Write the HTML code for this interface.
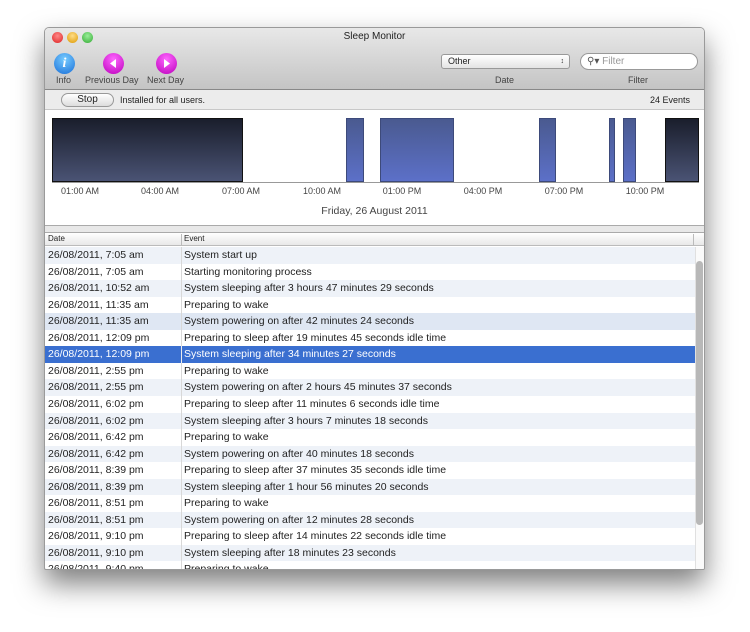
<!DOCTYPE html>
<html><head><style>
*{margin:0;padding:0;box-sizing:border-box}
body{width:750px;height:632px;background:#fff;position:relative;overflow:hidden;font-family:"Liberation Sans",sans-serif}
.win{position:absolute;left:44px;top:27px;width:661px;height:543px;background:#fff;border:1px solid #9a9a9a;border-radius:5px 5px 2px 2px;box-shadow:0 14px 28px rgba(0,0,0,.5);overflow:hidden}
.tb{position:absolute;left:0;top:0;width:100%;height:62px;background:linear-gradient(#e8e8e8,#c4c4c4);border-bottom:1px solid #888}
.ab{position:absolute;font-size:9px;color:#444;top:47px}
.dot{position:absolute;top:4px;width:11px;height:11px;border-radius:50%}
.btn{position:absolute;top:25px;width:21px;height:21px;border-radius:50%}
.st{position:absolute;left:0;top:62px;width:100%;height:20px;background:#ececec;border-bottom:1px solid #c8c8c8;font-size:9px;color:#222}
.chart{position:absolute;left:0;top:82px;width:100%;height:115px;background:#fff}
.bar{position:absolute;top:8px;height:64px;background:linear-gradient(#4a5a90,#5c70c8);border:1px solid #3d4a7a}
.dark{background:linear-gradient(#1a1e2c,#4a5374);border-color:#111}
.tl{position:absolute;top:76px;font-size:9px;color:#444;width:60px;margin-left:-30px;text-align:center}
.tick{position:absolute;top:73px;width:1px;height:4px;background:#999}
.row{position:absolute;left:0;width:650px;height:16.55px;font-size:10.5px;color:#222;line-height:16px}
.row span{position:absolute;left:3px}
.row span+span{left:139px}
.row.a{background:#eef2f8}
.row.s{background:#3a6fd0;color:#fff}
</style></head><body>
<div class="win">
 <div class="tb">
  <div class="dot" style="left:7px;background:radial-gradient(circle at 50% 35%,#f88,#d22)"></div>
  <div class="dot" style="left:22px;background:radial-gradient(circle at 50% 35%,#fd8,#d90)"></div>
  <div class="dot" style="left:37px;background:radial-gradient(circle at 50% 35%,#9e9,#3a3)"></div>
  <div style="position:absolute;top:3px;width:100%;text-align:center;font-size:10px;color:#222">Sleep Monitor</div>
  <div class="btn" style="left:9px;background:radial-gradient(circle at 50% 30%,#7cf,#1a6fd8);color:#fff;font:italic bold 14px 'Liberation Serif',serif;text-align:center;line-height:21px">i</div>
  <div class="btn" style="left:58px;background:radial-gradient(circle at 50% 30%,#f6f,#b0b)"><svg width="21" height="21"><path d="M13 6L7 10.5L13 15Z" fill="#fff"/></svg></div>
  <div class="btn" style="left:111px;background:radial-gradient(circle at 50% 30%,#f6f,#b0b)"><svg width="21" height="21"><path d="M8 6L14 10.5L8 15Z" fill="#fff"/></svg></div>
  <div class="ab" style="left:11px">Info</div>
  <div class="ab" style="left:40px">Previous Day</div>
  <div class="ab" style="left:102px">Next Day</div>
  <div style="position:absolute;left:396px;top:26px;width:129px;height:15px;border:1px solid #999;border-radius:3px;background:linear-gradient(#fff,#e4e4e4);font-size:9px;line-height:13px;padding-left:6px;color:#222">Other<span style="position:absolute;right:5px;font-size:7px">&#8597;</span></div>
  <div style="position:absolute;left:535px;top:25px;width:118px;height:17px;border:1px solid #999;border-radius:9px;background:#fff;font-size:10px;line-height:15px;padding-left:6px;color:#999"><span style="color:#555">&#9906;&#9662;</span> Filter</div>
  <div class="ab" style="left:450px">Date</div>
  <div class="ab" style="left:583px">Filter</div>
 </div>
 <div class="st">
  <div style="position:absolute;left:16px;top:3px;width:53px;height:14px;border:1px solid #999;border-radius:7px;background:linear-gradient(#fff,#ddd);text-align:center;font-size:10px;line-height:12px">Stop</div>
  <div style="position:absolute;left:75px;top:5px">Installed for all users.</div>
  <div style="position:absolute;right:14px;top:5px">24 Events</div>
 </div>
 <div class="chart">
  <div class="bar dark" style="left:7px;width:191px"></div>
  <div class="bar" style="left:301px;width:18px"></div>
  <div class="bar" style="left:335px;width:74px"></div>
  <div class="bar" style="left:494px;width:17px"></div>
  <div class="bar" style="left:564px;width:6px"></div>
  <div class="bar" style="left:578px;width:13px"></div>
  <div class="bar dark" style="left:620px;width:34px"></div>
  <div style="position:absolute;left:7px;top:72px;width:647px;height:1px;background:#999"></div>
  <div class="tl" style="left:35px">01:00 AM</div><div class="tl" style="left:115px">04:00 AM</div><div class="tl" style="left:196px">07:00 AM</div><div class="tl" style="left:277px">10:00 AM</div><div class="tl" style="left:357px">01:00 PM</div><div class="tl" style="left:438px">04:00 PM</div><div class="tl" style="left:519px">07:00 PM</div><div class="tl" style="left:600px">10:00 PM</div>
  <div style="position:absolute;top:95px;width:100%;text-align:center;font-size:10.5px;color:#444">Friday, 26 August 2011</div>
 </div>
 <div style="position:absolute;left:0;top:197px;width:100%;height:8px;background:#e8e8e8;border-top:1px solid #aaa;border-bottom:1px solid #aaa"></div>
 <div style="position:absolute;left:0;top:205px;width:100%;height:13px;background:linear-gradient(#fff,#e8e8e8);border-bottom:1px solid #bbb;font-size:8px;color:#222;line-height:12px">
  <span style="position:absolute;left:3px">Date</span><span style="position:absolute;left:139px">Event</span>
  <div style="position:absolute;left:136px;top:1px;width:1px;height:11px;background:#bbb"></div>
  <div style="position:absolute;left:648px;top:1px;width:1px;height:11px;background:#bbb"></div>
 </div>
 <div style="position:absolute;left:0;top:219px;width:100%;height:324px;overflow:hidden">
 <div class="row a" style="top:0"><span>26/08/2011, 7:05 am</span><span>System start up</span></div>
 <div class="row" style="top:16.55px"><span>26/08/2011, 7:05 am</span><span>Starting monitoring process</span></div>
 <div class="row a" style="top:33.1px"><span>26/08/2011, 10:52 am</span><span>System sleeping after 3 hours 47 minutes 29 seconds</span></div>
 <div class="row" style="top:49.65px"><span>26/08/2011, 11:35 am</span><span>Preparing to wake</span></div>
 <div class="row a" style="top:66.2px;background:#dfe7f3"><span>26/08/2011, 11:35 am</span><span>System powering on after 42 minutes 24 seconds</span></div>
 <div class="row" style="top:82.75px"><span>26/08/2011, 12:09 pm</span><span>Preparing to sleep after 19 minutes 45 seconds idle time</span></div>
 <div class="row s" style="top:99.3px"><span>26/08/2011, 12:09 pm</span><span>System sleeping after 34 minutes 27 seconds</span></div>
 <div class="row" style="top:115.85px"><span>26/08/2011, 2:55 pm</span><span>Preparing to wake</span></div>
 <div class="row a" style="top:132.4px"><span>26/08/2011, 2:55 pm</span><span>System powering on after 2 hours 45 minutes 37 seconds</span></div>
 <div class="row" style="top:148.95px"><span>26/08/2011, 6:02 pm</span><span>Preparing to sleep after 11 minutes 6 seconds idle time</span></div>
 <div class="row a" style="top:165.5px"><span>26/08/2011, 6:02 pm</span><span>System sleeping after 3 hours 7 minutes 18 seconds</span></div>
 <div class="row" style="top:182.05px"><span>26/08/2011, 6:42 pm</span><span>Preparing to wake</span></div>
 <div class="row a" style="top:198.6px"><span>26/08/2011, 6:42 pm</span><span>System powering on after 40 minutes 18 seconds</span></div>
 <div class="row" style="top:215.15px"><span>26/08/2011, 8:39 pm</span><span>Preparing to sleep after 37 minutes 35 seconds idle time</span></div>
 <div class="row a" style="top:231.7px"><span>26/08/2011, 8:39 pm</span><span>System sleeping after 1 hour 56 minutes 20 seconds</span></div>
 <div class="row" style="top:248.25px"><span>26/08/2011, 8:51 pm</span><span>Preparing to wake</span></div>
 <div class="row a" style="top:264.8px"><span>26/08/2011, 8:51 pm</span><span>System powering on after 12 minutes 28 seconds</span></div>
 <div class="row" style="top:281.35px"><span>26/08/2011, 9:10 pm</span><span>Preparing to sleep after 14 minutes 22 seconds idle time</span></div>
 <div class="row a" style="top:297.9px"><span>26/08/2011, 9:10 pm</span><span>System sleeping after 18 minutes 23 seconds</span></div>
 <div class="row" style="top:314.45px"><span>26/08/2011, 9:40 pm</span><span>Preparing to wake</span></div>
 <div style="position:absolute;left:136px;top:0;width:1px;height:330px;background:#d8d8d8"></div>
 <div style="position:absolute;left:136px;top:99.3px;width:1px;height:16.5px;background:#fff;opacity:.5"></div>
 </div>
 <div style="position:absolute;left:650px;top:219px;width:11px;height:324px;background:#fafafa;border-left:1px solid #e0e0e0"></div>
 <div style="position:absolute;left:651px;top:233px;width:7px;height:264px;border-radius:4px;background:#b8b8b8"></div>
</div>
</body></html>
